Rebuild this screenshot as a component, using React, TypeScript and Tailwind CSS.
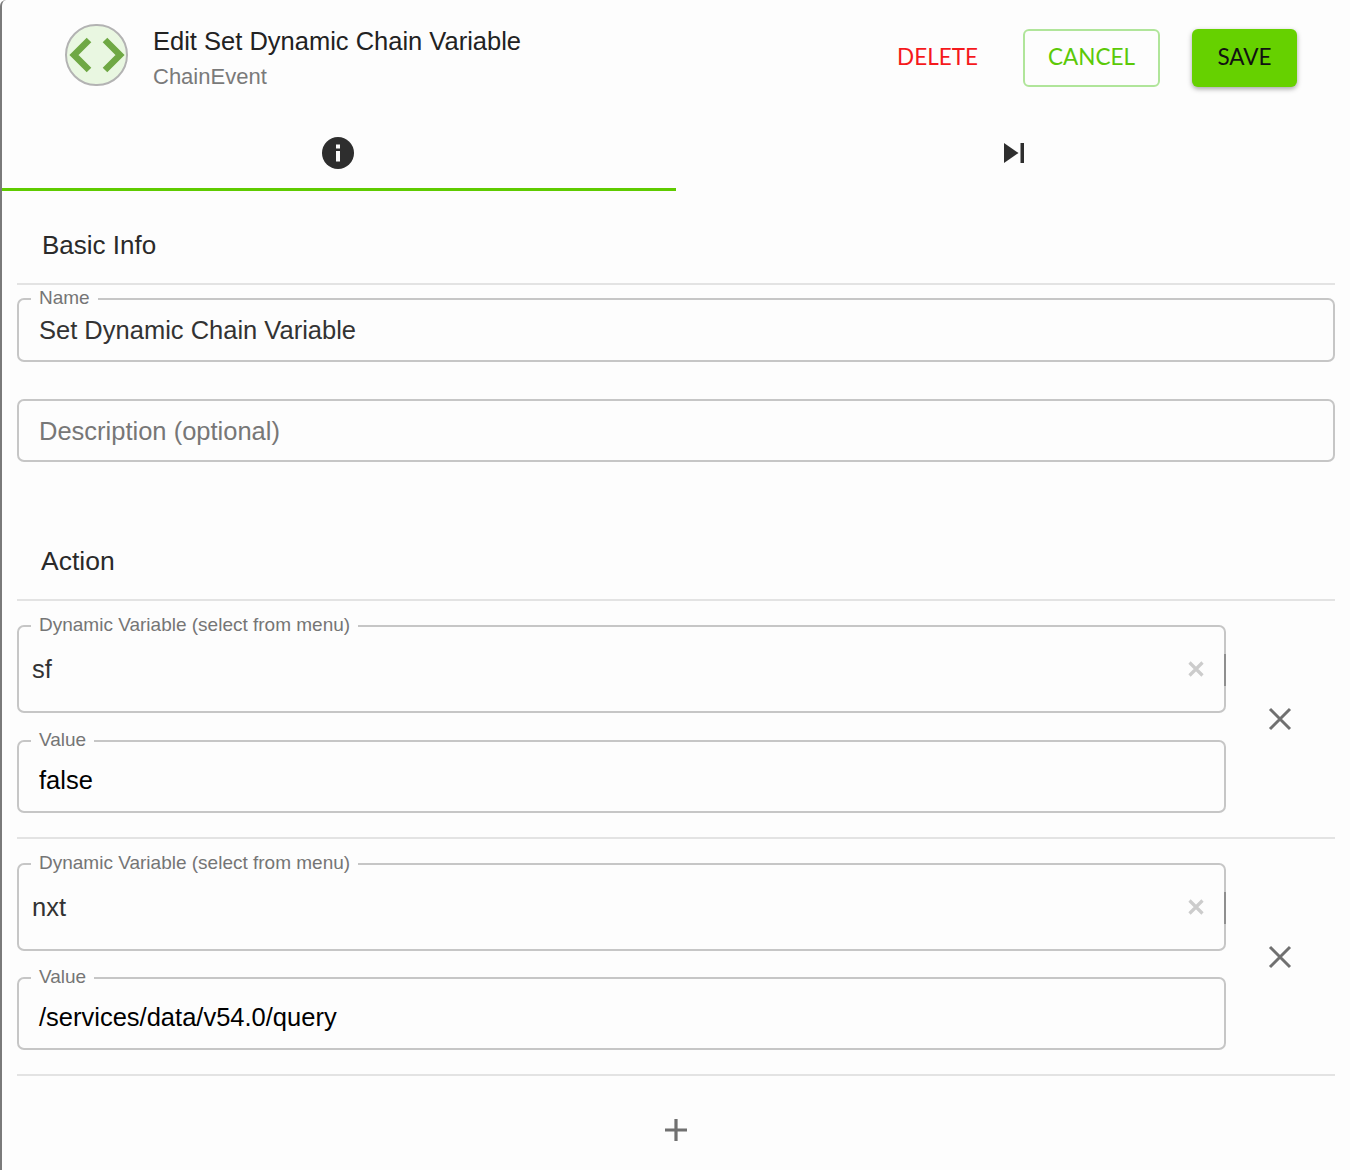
import React from "react";

function Rule() {
  return <div className="h-[2px] bg-[#e3e3e3]" />;
}

function Label({ text }: { text: string }) {
  return (
    <legend className="ml-[12px] h-0 px-[8px] text-[19px] leading-[0] text-[#757575]">
      <span className="relative -top-[1px]">{text}</span>
    </legend>
  );
}

function ActionRow({ value, value2, gap }: { value: string; value2: string; gap: string }) {
  return (
    <div className="flex items-center">
      <div className={`flex w-[1209px] flex-col ${gap}`}>
        <fieldset className="relative m-0 h-[88px] min-w-0 rounded-[7px] border-2 border-[#c6c6c6] p-0">
          <Label text="Dynamic Variable (select from menu)" />
          <div className="flex h-[84px] items-center justify-between pl-[13px] pr-[19px] text-[25.5px] text-[#333333]">
            <span>{value}</span>
            <svg width="18" height="18" viewBox="0 0 18 18" className="text-[#cccccc]" fill="none" stroke="currentColor" strokeWidth="3.2">
              <path d="M2.5 2.5 15.5 15.5M15.5 2.5 2.5 15.5" />
            </svg>
          </div>
          <div className="absolute right-[-2px] top-[27px] h-[32px] w-[2px] bg-[#8f8f8f]" />
        </fieldset>
        <fieldset className="m-0 h-[73px] min-w-0 rounded-[7px] border-2 border-[#c6c6c6] p-0">
          <Label text="Value" />
          <div className="flex h-[69px] items-center pl-[20px] pt-[8px] text-[25.5px] text-black">{value2}</div>
        </fieldset>
      </div>
      <button className="ml-[42px] flex h-[24px] w-[24px] items-center justify-center text-[#707070]">
        <svg width="24" height="24" viewBox="0 0 24 24" fill="none" stroke="currentColor" strokeWidth="3">
          <path d="M2 2 22 22M22 2 2 22" />
        </svg>
      </button>
    </div>
  );
}

export default function App() {
  return (
    <div className="h-[1170px] w-[1350px] overflow-hidden rounded-tl-[6px] border-l-2 border-[#7a7a7a] bg-[#fdfdfd] font-['Liberation_Sans',Arial,sans-serif]">
      <header className="flex h-[118px] items-start">
        <div className="ml-[63px] mt-[24px] flex h-[62px] w-[63px] items-center justify-center rounded-full border-2 border-[#b3b3b3] bg-[#e9f7e1]">
          <svg width="58" height="36" viewBox="0 0 58 36" fill="none" stroke="#6fa844" strokeWidth="6.5">
            <path d="M21 3 6 18 21 33" />
            <path d="M37 3 52 18 37 33" />
          </svg>
        </div>
        <div className="ml-[25px] mt-[24px]">
          <div className="text-[25.5px] leading-[34px] text-[#222222]">Edit Set Dynamic Chain Variable</div>
          <div className="mt-[2px] text-[22px] leading-[34px] text-[#7a7a7a]">ChainEvent</div>
        </div>
        <div className="ml-auto mr-[53px] mt-[29px] flex items-center font-['Lato',sans-serif] text-[22.5px]">
          <span className="mr-[45px] pb-[2px] text-[#f5191c]">DELETE</span>
          <button className="mr-[32px] flex h-[58px] w-[137px] items-center justify-center rounded-[6px] border-2 border-[#b0e59a] pb-[2px] text-[#5cc908]">CANCEL</button>
          <button className="flex h-[58px] w-[105px] items-center justify-center rounded-[6px] bg-[#66d100] pb-[2px] text-[#111111] shadow-[0_2px_5px_rgba(0,0,0,0.35)]">SAVE</button>
        </div>
      </header>

      <nav className="flex h-[73px]">
        <div className="flex w-[674px] items-center justify-center border-b-[3px] border-[#5fcb00] pr-[2px] pb-[1px]">
          <svg width="32" height="32" viewBox="0 0 32 32">
            <circle cx="16" cy="16" r="16" fill="#2e2e2e" />
            <rect x="14" y="14" width="4" height="10.5" fill="#fdfdfd" />
            <rect x="14" y="7.5" width="4" height="4" fill="#fdfdfd" />
          </svg>
        </div>
        <div className="flex w-[674px] items-center justify-center pl-[1px] pb-[3px]">
          <svg width="20" height="20" viewBox="0 0 20 20" fill="#2e2e2e">
            <path d="M0 0 14.5 10 0 20Z" />
            <rect x="16.5" y="0" width="3.5" height="20" />
          </svg>
        </div>
      </nav>

      <main className="pl-[15px] pr-[15px]">
        <h2 className="ml-[25px] flex h-[92px] items-center pt-[17px] text-[26px] font-normal text-[#2a2a2a]">Basic Info</h2>
        <Rule />
        <div className="mt-[13px] flex flex-col gap-[37px]">
          <fieldset className="m-0 h-[64px] min-w-0 rounded-[7px] border-2 border-[#c6c6c6] p-0">
            <Label text="Name" />
            <div className="flex h-[60px] items-center pl-[20px] text-[25.5px] text-[#333333]">Set Dynamic Chain Variable</div>
          </fieldset>
          <div className="flex h-[63px] items-center rounded-[7px] border-2 border-[#c6c6c6] pl-[20px] pt-[1px] text-[25.5px] text-[#777777]">Description (optional)</div>
        </div>
        <h2 className="ml-[24px] mt-[61px] flex h-[76px] items-center pt-[2px] text-[26.5px] font-normal text-[#2a2a2a]">Action</h2>
        <Rule />
        <div className="mt-[24px]">
          <ActionRow value="sf" value2="false" gap="gap-[27px]" />
        </div>
        <div className="mt-[24px]"><Rule /></div>
        <div className="mt-[24px]">
          <ActionRow value="nxt" value2="/services/data/v54.0/query" gap="gap-[26px]" />
        </div>
        <div className="mt-[24px]"><Rule /></div>
        <div className="flex h-[107px] items-center justify-center">
          <svg width="24" height="24" viewBox="0 0 24 24" stroke="#707070" strokeWidth="3.2" fill="none">
            <path d="M12 1V23M1 12H23" />
          </svg>
        </div>
      </main>
    </div>
  );
}
